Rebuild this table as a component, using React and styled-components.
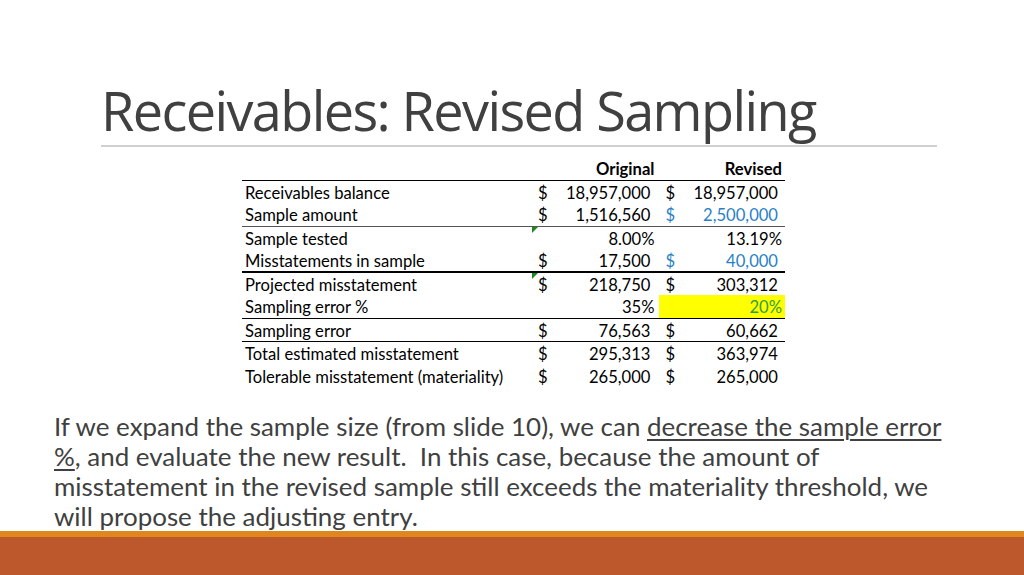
import React from "react";
import styled, { createGlobalStyle } from "styled-components";

const Global = createGlobalStyle`
  html, body { margin: 0; padding: 0; background: #fff; }
  #root { width: 1024px; height: 575px; overflow: hidden; }
`;

const Slide = styled.div`
  width: 1024px;
  height: 575px;
  display: flex;
  flex-direction: column;
  background: #ffffff;
  overflow: hidden;
`;

const Header = styled.header`
  padding: 79px 87px 0 101px;
`;

const Title = styled.h1`
  margin: 0;
  font-family: "Open Sans", sans-serif;
  font-weight: 400;
  font-size: 54px;
  font-stretch: 88%;
  line-height: 63px;
  color: #404040;
  letter-spacing: -1.6px;
  white-space: nowrap;
`;

const Rule = styled.div`
  height: 2px;
  background: #d0d0d0;
  margin-top: 3px;
`;

const TableArea = styled.div`
  padding: 10px 0 0 242px;
`;

const Table = styled.table`
  border-collapse: collapse;
  font-family: Lato, "Liberation Sans", sans-serif;
  font-size: 16.6px;
  color: #000;
  table-layout: fixed;
  width: 543px;
`;

const Row = styled.tr`
  height: 23px;
  border-bottom: ${(p) => p.$rule || "none"};
`;

const Label = styled.td`
  width: 288px;
  padding: 2px 0 0 3px;
  white-space: nowrap;
`;

const Money = styled.td`
  width: ${(p) => p.$w}px;
  padding: 2px ${(p) => p.$pr}px 0 ${(p) => p.$pl}px;
  white-space: nowrap;
  position: relative;
  background: ${(p) => (p.$hl ? "#ffff00" : "transparent")};
  color: ${(p) => p.$color || "#000"};
`;

const Cell = styled.div`
  display: flex;
  justify-content: space-between;
  align-items: baseline;
`;

const HeadCell = styled.th`
  text-align: right;
  font-weight: 700;
  padding: 1px ${(p) => p.$pr}px 0 0;
`;

const Value = styled.span`
  margin-right: ${(p) => (p.$pct ? -4 : 0)}px;
`;

const ErrorMark = styled.span`
  position: absolute;
  left: 0;
  top: 0;
  width: 0;
  height: 0;
  border-top: 6px solid #1e8a1e;
  border-right: 6px solid transparent;
`;

const Body = styled.p`
  margin: 24px 0 0 0;
  padding: 0 70px 0 54px;
  font-family: Lato, "Liberation Sans", sans-serif;
  font-size: 25.95px;
  line-height: 30px;
  color: #404040;
`;

const U = styled.span`
  text-decoration: underline;
  text-decoration-thickness: 2px;
  text-underline-offset: 3px;
`;

const Spacer = styled.div`
  flex: 1;
`;

const Footer = styled.footer`
  height: 44px;
  background: #bd582c;
  border-top: 6px solid #e0861e;
  box-sizing: border-box;
`;

const BLUE = "#2a7fc6";
const GREEN = "#2f9e3a";

const rows = [
  { label: "Receivables balance", o: "18,957,000", od: true, r: "18,957,000", rd: true },
  { label: "Sample amount", o: "1,516,560", od: true, r: "2,500,000", rd: true, rc: BLUE, rule: "1px solid #555" },
  { label: "Sample tested", o: "8.00%", op: true, r: "13.19%", rp: true, mark: true },
  { label: "Misstatements in sample", o: "17,500", od: true, r: "40,000", rd: true, rc: BLUE, rule: "2px solid #000" },
  { label: "Projected misstatement", o: "218,750", od: true, r: "303,312", rd: true, mark: true },
  { label: "Sampling error %", o: "35%", op: true, r: "20%", rp: true, hl: true, rc: GREEN, rule: "1px solid #000" },
  { label: "Sampling error", o: "76,563", od: true, r: "60,662", rd: true, rule: "1px solid #000" },
  { label: "Total estimated misstatement", o: "295,313", od: true, r: "363,974", rd: true },
  { label: "Tolerable misstatement (materiality)", o: "265,000", od: true, r: "265,000", rd: true },
];

export default function App() {
  return (
    <Slide>
      <Global />
      <Header>
        <Title>Receivables: Revised Sampling</Title>
        <Rule />
      </Header>
      <TableArea>
        <Table>
          <thead>
            <Row $rule="1px solid #000">
              <th style={{ width: 288 }} />
              <HeadCell $pr={4}>Original</HeadCell>
              <HeadCell $pr={3}>Revised</HeadCell>
            </Row>
          </thead>
          <tbody>
            {rows.map((r) => (
              <Row key={r.label} $rule={r.rule}>
                <Label>{r.label}</Label>
                <Money $w={128} $pl={6} $pr={8}>
                  {r.mark && <ErrorMark />}
                  <Cell>
                    <span>{r.od ? "$" : ""}</span>
                    <Value $pct={r.op}>{r.o}</Value>
                  </Cell>
                </Money>
                <Money $w={127} $pl={7} $pr={7} $hl={r.hl} $color={r.rc}>
                  <Cell>
                    <span>{r.rd ? "$" : ""}</span>
                    <Value $pct={r.rp}>{r.r}</Value>
                  </Cell>
                </Money>
              </Row>
            ))}
          </tbody>
        </Table>
      </TableArea>
      <Body>
        If we expand the sample size (from slide 10), we can{" "}
        <U>decrease the sample error %</U>, and evaluate the new result.&nbsp; In this case,
        because the amount of misstatement in the revised sample still exceeds the materiality
        threshold, we will propose the adjusting entry.
      </Body>
      <Spacer />
      <Footer />
    </Slide>
  );
}
